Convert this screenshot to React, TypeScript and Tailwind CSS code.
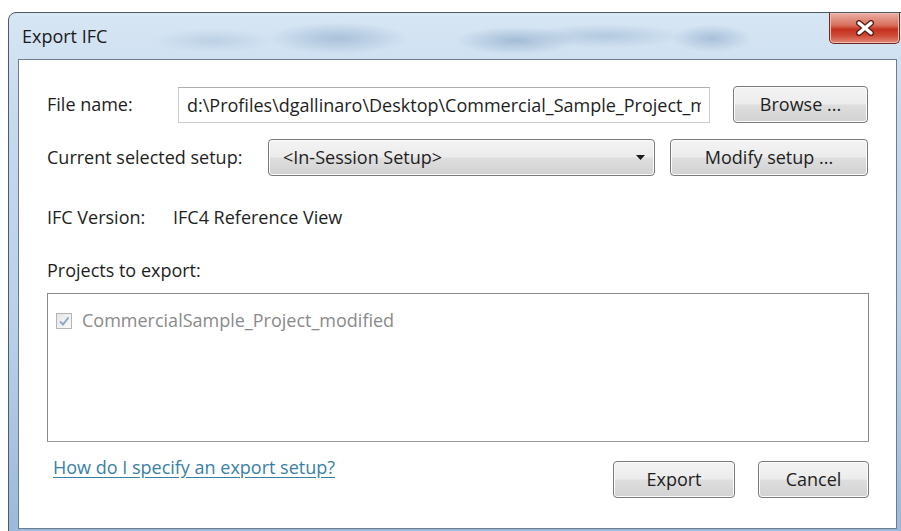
import { ChangeEvent, useState } from 'react'

const font = { fontFamily: '"Open Sans", "Noto Sans", "Liberation Sans", sans-serif' }

function WinButton({ label, className = '' }: { label: string; className?: string }) {
  return (
    <button
      className={`h-[37px] shrink-0 rounded-[4px] border border-[#7a7a7a] bg-[linear-gradient(#f3f3f3_0%,#ececec_48%,#dedede_52%,#d2d2d2_100%)] text-[18px] text-[#1e1e1e] shadow-[inset_0_0_0_1px_#fcfcfc] ${className}`}
    >
      {label}
    </button>
  )
}

function CloseButton() {
  return (
    <div className="flex h-[31px] w-[71px] items-center justify-center rounded-b-[5px] border border-t-0 border-[#6a2a22] bg-[linear-gradient(#eab0a3_0%,#d9705f_40%,#c4321f_55%,#cf4a36_75%,#e3897a_100%)] shadow-[inset_0_0_0_1px_#f0bcb0]">
      <svg width="20" height="16" viewBox="0 0 20 16">
        <path d="M4 3 L16 13 M16 3 L4 13" stroke="#5a1d16" strokeWidth="6" strokeLinecap="round" />
        <path d="M4 3 L16 13 M16 3 L4 13" stroke="#ffffff" strokeWidth="3.4" strokeLinecap="round" />
      </svg>
    </div>
  )
}

function DisabledCheck() {
  return (
    <div className="flex h-[16px] w-[16px] shrink-0 items-center justify-center border border-[#b4b4b4] bg-[linear-gradient(135deg,#e6e6e6,#fafafa)]">
      <svg width="12" height="12" viewBox="0 0 12 12">
        <path d="M2 6.5 L5 9.5 L10.5 2.5" fill="none" stroke="#93a6c4" strokeWidth="2" />
      </svg>
    </div>
  )
}

export default function App() {
  const [fileName, setFileName] = useState('d:\\Profiles\\dgallinaro\\Desktop\\Commercial_Sample_Project_modified.ifc')

  return (
    <div className="h-[531px] w-[901px] overflow-hidden bg-white pl-[8px] pt-[12px]" style={font}>
      {/* window frame */}
      <div className="flex h-[530px] w-[900px] flex-col rounded-tl-[8px] border border-[#4f5a66] bg-[linear-gradient(180deg,#d7e6f4_0%,#c6daee_20%,#b9d0e8_60%,#9ab8da_100%)] pl-[9px]">
        {/* title bar */}
        <div className="flex h-[46px] items-start justify-between bg-[radial-gradient(ellipse_70px_16px_at_36%_55%,#a9c1da_0%,transparent_100%),radial-gradient(ellipse_60px_14px_at_56%_60%,#a3bcd6_0%,transparent_100%),radial-gradient(ellipse_40px_14px_at_78%_55%,#a8c0d9_0%,transparent_100%),radial-gradient(ellipse_80px_12px_at_66%_50%,#b3c9df_0%,transparent_100%),radial-gradient(ellipse_60px_12px_at_22%_60%,#bdd1e5_0%,transparent_100%)]">
          <div className="pl-[4px] pt-[11px] text-[18px] leading-[24px] text-[#1a1a1a]">Export IFC</div>
          <div className="mr-[7px]">
            <CloseButton />
          </div>
        </div>

        {/* client area */}
        <div className="h-[470px] w-[879px] border border-[#6f7c8a] bg-white text-[18px] text-[#1e1e1e]">
          <div className="flex flex-col pl-[28px] pt-[26px]">
            <div className="flex items-center">
              <div className="w-[131px]">File name:</div>
              <input
                value={fileName}
                onChange={(e: ChangeEvent<HTMLInputElement>) => setFileName(e.target.value)}
                className="h-[36px] w-[532px] border border-[#c9ced6] border-t-[#abadb3] bg-white px-[8px] text-[18px] text-[#1e1e1e] outline-none"
              />
              <WinButton label="Browse ..." className="ml-[23px] w-[135px]" />
            </div>

            <div className="mt-[16px] flex items-center">
              <div className="w-[221px]">Current selected setup:</div>
              <div className="flex h-[37px] w-[387px] items-center justify-between rounded-[4px] border border-[#7a7a7a] bg-[linear-gradient(#f3f3f3_0%,#ececec_48%,#dedede_52%,#d2d2d2_100%)] pl-[14px] pr-[9px] shadow-[inset_0_0_0_1px_#fcfcfc]">
                <span>&lt;In-Session Setup&gt;</span>
                <svg width="9" height="5" viewBox="0 0 9 5">
                  <path d="M0 0 H9 L4.5 5 Z" fill="#1a1a1a" />
                </svg>
              </div>
              <WinButton label="Modify setup ..." className="ml-[15px] w-[198px]" />
            </div>

            <div className="mt-[28px] flex items-center">
              <div className="w-[126px]">IFC Version:</div>
              <div>IFC4 Reference View</div>
            </div>

            <div className="mt-[26px]">Projects to export:</div>

            <div className="mt-[9px] flex h-[149px] w-[822px] items-start border border-[#8a8a8a] border-b-[#9a9a9a] pl-[8px] pt-[13px]">
              <div className="flex items-center gap-[10px] text-[#8a8a8a]">
                <DisabledCheck />
                <span>CommercialSample_Project_modified</span>
              </div>
            </div>

            <div className="mt-[12px] flex w-[822px] items-start justify-between">
              <a href="#" className="ml-[6px] text-[#3a7fa6] underline underline-offset-[3px]">
                How do I specify an export setup?
              </a>
              <div className="mt-[7px] flex">
                <WinButton label="Export" className="w-[122px]" />
                <WinButton label="Cancel" className="ml-[23px] w-[111px]" />
              </div>
            </div>
          </div>
        </div>
      </div>
    </div>
  )
}
